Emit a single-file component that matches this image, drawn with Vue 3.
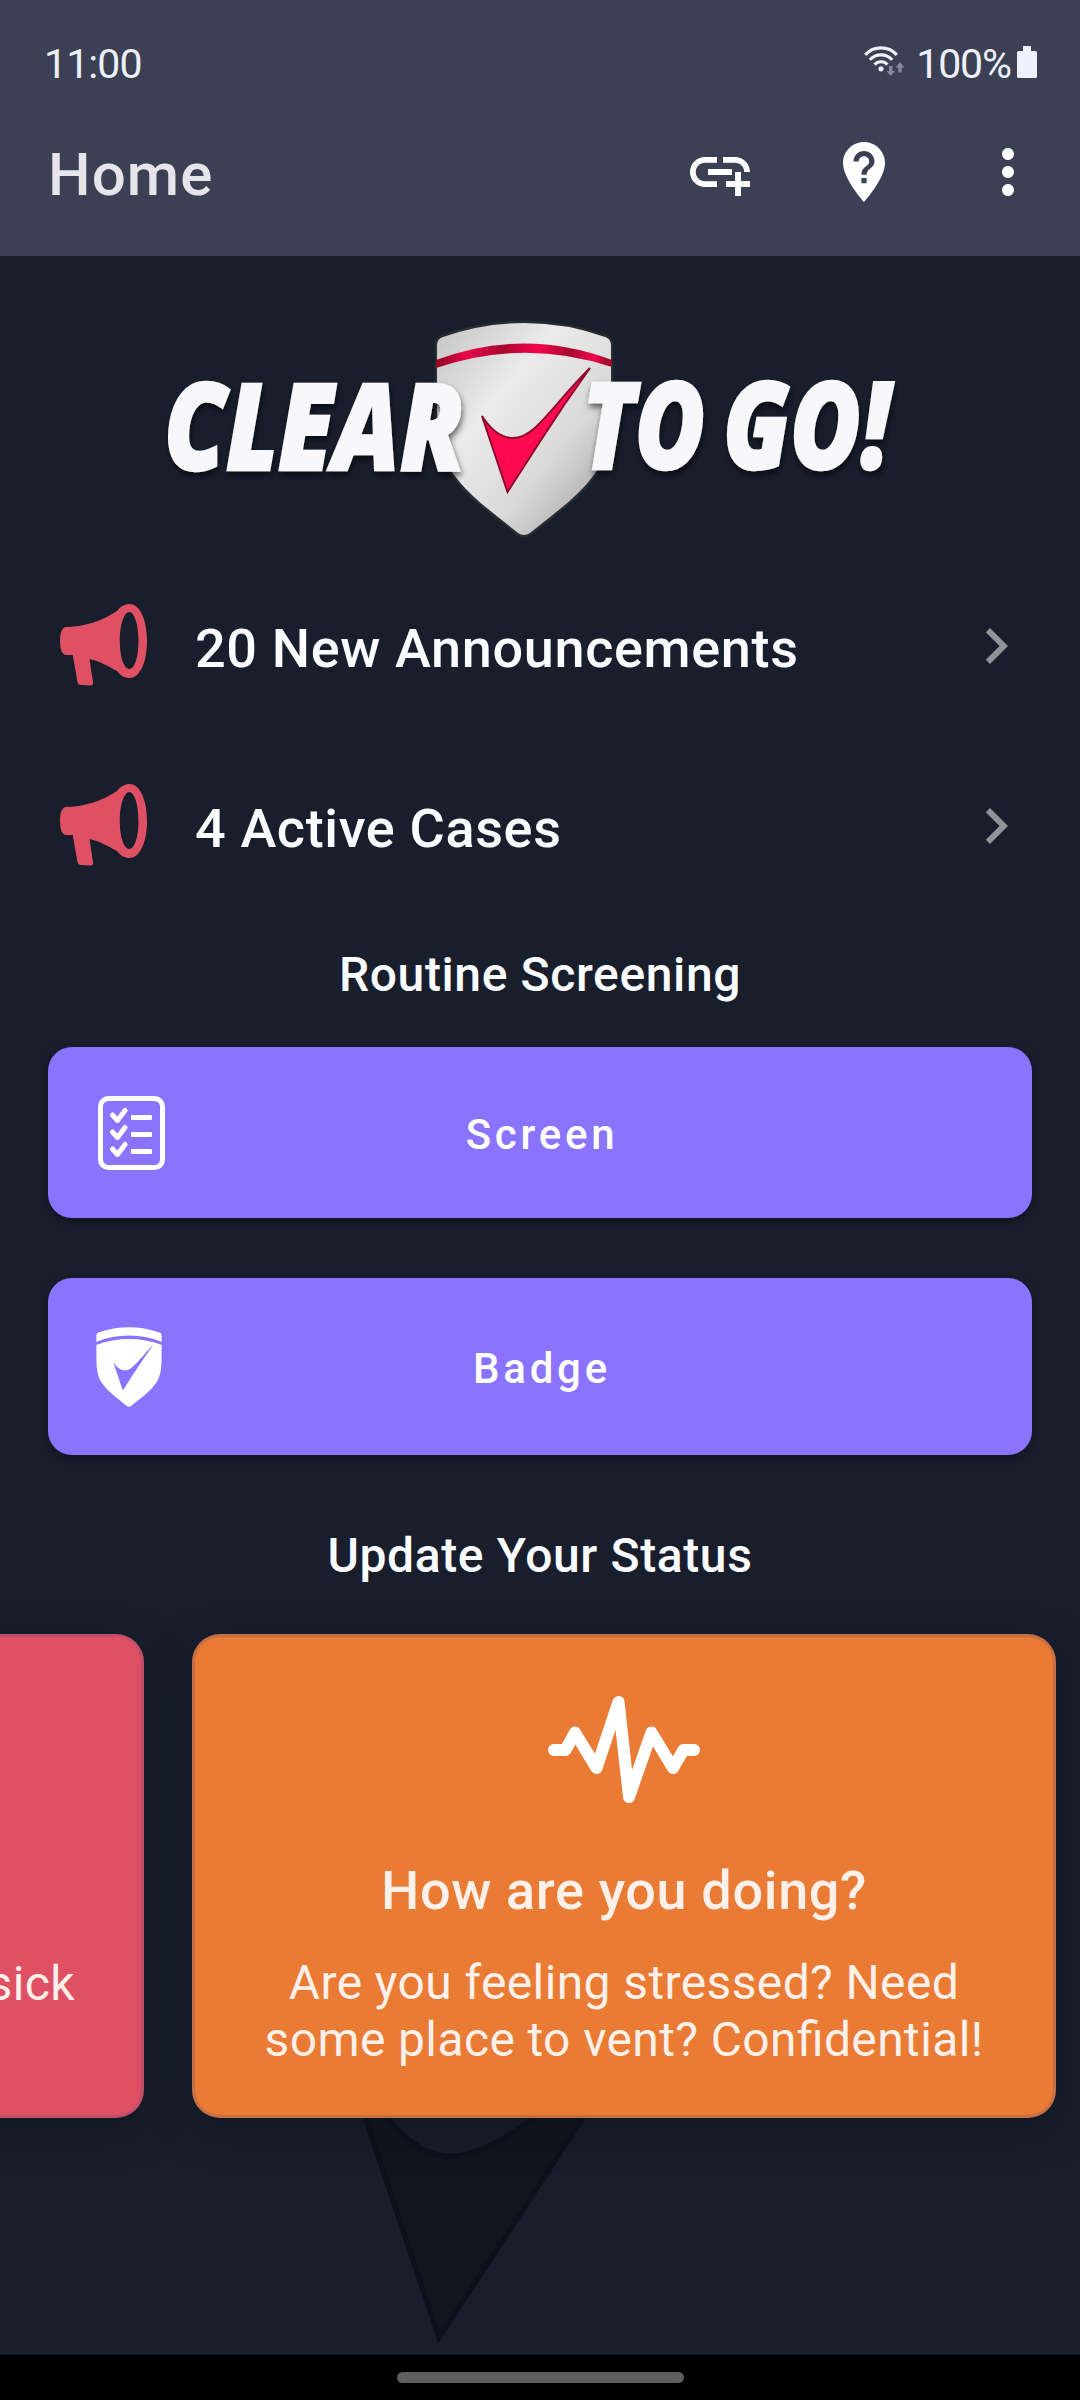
<template>
  <div class="screen">
    <header class="top">
      <div class="status-bar">
        <span class="clock">11:00</span>
        <div class="status-right">
          <svg class="wifi" width="42" height="32" viewBox="0 0 42 32">
            <g fill="none" stroke="#eef1fb" stroke-width="3.2">
              <path d="M1.2 9.8a21.5 21.5 0 0 1 31.6 0" />
              <path d="M5.8 14.8a15 15 0 0 1 22.4 0" />
              <path d="M10.6 19.6a8.6 8.6 0 0 1 12.8 0" />
            </g>
            <circle cx="17" cy="23.8" r="2.6" fill="#eef1fb" />
            <g fill="#84889a">
              <path d="M25 21h3.4v5H31l-4.3 5-4.3-5H25z" />
              <path d="M34.3 27.5h3.4v-5h2.7l-4.4-5.5-4.4 5.5h2.7z" />
            </g>
          </svg>
          <span class="percent">100%</span>
          <svg class="battery" width="20" height="32" viewBox="0 0 20 32">
            <path fill="#eef1fb" d="M6 0h8v5h4.5q1.5 0 1.5 1.5v24q0 1.5-1.5 1.5h-17Q0 32 0 30.5v-24Q0 5 1.5 5H6z" />
          </svg>
        </div>
      </div>
      <div class="toolbar">
        <h1>Home</h1>
        <nav class="actions">
          <svg v-for="icon in actions" :key="icon.name" viewBox="0 0 24 24">
            <path :d="icon.path" />
          </svg>
        </nav>
      </div>
    </header>

    <main class="content">
      <svg class="watermark" width="420" height="440" viewBox="0 0 420 440">
        <path
          d="M-14 -20Q65 254 150 254Q225 254 385 60L139 436Z"
          fill="#12141e"
          stroke="#0c111b"
          stroke-width="5"
        />
      </svg>

      <svg class="logo" width="760" height="240" viewBox="150 310 760 240">
        <defs>
          <linearGradient id="metal" x1="0" y1="0" x2="1" y2="1">
            <stop offset="0" stop-color="#c4c4c4" />
            <stop offset="0.35" stop-color="#ebebeb" />
            <stop offset="0.65" stop-color="#d9d9d9" />
            <stop offset="1" stop-color="#999" />
          </linearGradient>
          <linearGradient id="band" x1="0" x2="1">
            <stop offset="0" stop-color="#8c0a25" />
            <stop offset="0.17" stop-color="#e8064a" />
            <stop offset="0.38" stop-color="#a8082f" />
            <stop offset="0.58" stop-color="#f3064e" />
            <stop offset="0.76" stop-color="#a8082f" />
            <stop offset="0.9" stop-color="#ee0a4c" />
            <stop offset="1" stop-color="#8c0a25" />
          </linearGradient>
          <filter id="drop" x="-10%" y="-20%" width="120%" height="150%">
            <feDropShadow dx="1" dy="4" stdDeviation="3" flood-color="#000" flood-opacity="0.6" />
          </filter>
        </defs>
        <path :d="shield" fill="url(#metal)" stroke="#292c2e" stroke-width="5" paint-order="stroke" />
        <path d="M436 360Q524 327 612 360V367Q524 338 436 368Z" fill="url(#band)" />
        <path :d="check" fill="#ff0a50" stroke="#8e0a2c" stroke-width="2" />
        <g class="logo-text" filter="url(#drop)">
          <text x="164" y="470" textLength="300" lengthAdjust="spacingAndGlyphs">CLEAR</text>
          <text x="582" y="469" textLength="123" lengthAdjust="spacingAndGlyphs">TO</text>
          <text x="723" y="469" textLength="167" lengthAdjust="spacingAndGlyphs">GO!</text>
        </g>
      </svg>

      <ul class="notices">
        <li v-for="notice in notices" :key="notice">
          <svg class="horn" width="88" height="84" viewBox="60 603 88 84">
            <path
              fill="#e05064"
              fill-rule="evenodd"
              d="M65 627C84 627 102 621 117 611C121 606 125 604 129.5 604C140 604 147 620 147 641S140 678 129.5 678C125 678 121 676 117 671C108 666 99 661 89.5 659L93 682Q93.5 685.5 90 685.5L81 685Q78 685 77.5 682L72.7 655H65Q60 653 60 641T65 627ZM129.3 612C124 612 119.8 625 119.8 641S124 669 129.3 669S138.5 657 138.5 641S134.5 612 129.3 612Z"
            />
          </svg>
          <span>{{ notice }}</span>
          <svg class="chevron" viewBox="0 0 24 24">
            <path d="M10 6L8.59 7.41 13.17 12l-4.58 4.59L10 18l6-6z" />
          </svg>
        </li>
      </ul>

      <h2 class="routine">Routine Screening</h2>
      <button class="action screen-btn">
        <svg width="67" height="74" viewBox="0 0 67 74">
          <g fill="none" stroke="#fff" stroke-width="5" stroke-linecap="round" stroke-linejoin="round">
            <rect x="2.5" y="2.5" width="62" height="69" rx="8" />
            <path v-for="y in [0, 17, 34]" :key="y" :d="`M14.5 ${y + 19}l5 5.5 7.5-10`" />
          </g>
          <rect v-for="y in [0, 17, 34]" :key="y" x="33" :y="y + 19" width="21" height="5" rx="1" fill="#fff" />
        </svg>
        <span>Screen</span>
      </button>
      <button class="action badge-btn">
        <svg width="66" height="80" viewBox="436 322 176 214" preserveAspectRatio="none">
          <path :d="shield" fill="#fff" />
          <path d="M436 362Q524 328 612 362V370Q524 338 436 370Z" fill="#8973ff" />
          <path :d="check" fill="#8973ff" />
        </svg>
        <span>Badge</span>
      </button>

      <h2 class="update">Update Your Status</h2>
      <div class="cards">
        <section class="card sick">
          <p>sick</p>
        </section>
        <section class="card mood">
          <svg width="152" height="108" viewBox="548 1695 152 108">
            <path
              d="M554 1750h11.5l9.5-17.5 21.5 35.5 22-66 10.5 95 22.5-64.500 21.500 35.500 10.500-18H694"
              fill="none"
              stroke="#fff"
              stroke-width="12"
              stroke-linecap="round"
              stroke-linejoin="round"
            />
          </svg>
          <h3>How are you doing?</h3>
          <p>Are you feeling stressed? Need<br />some place to vent? Confidential!</p>
        </section>
      </div>
    </main>

    <footer class="nav-bar"><i></i></footer>
  </div>
</template>

<script setup>
const notices = ['20 New Announcements', '4 Active Cases']

const actions = [
  {
    name: 'add-link',
    path: 'M8 11h8v2H8v-2zm12.1 1H22c0-2.76-2.24-5-5-5h-4v1.9h4c1.71 0 3.1 1.39 3.1 3.1zM3.9 12c0-1.71 1.39-3.1 3.1-3.1h4V7H7c-2.76 0-5 2.24-5 5s2.24 5 5 5h4v-1.9H7c-1.71 0-3.1-1.39-3.1-3.1zM19 12h-2v3h-3v2h3v3h2v-3h3v-2h-3v-3z'
  },
  {
    name: 'location-help',
    path: 'M12 2C8.14 2 5 5.14 5 9c0 5.25 7 13 7 13s7-7.75 7-13c0-3.86-3.14-7-7-7zm.88 13.75h-1.75V14h1.75v1.75zm0-2.87h-1.75c0-2.84 2.62-2.62 2.62-4.38 0-.96-.79-1.75-1.75-1.75s-1.75.79-1.75 1.75H8.5C8.5 6.57 10.07 5 12 5s3.5 1.57 3.5 3.5c0 2.19-2.62 2.41-2.62 4.38z'
  },
  {
    name: 'more',
    path: 'M12 8c1.1 0 2-.9 2-2s-.9-2-2-2-2 .9-2 2 .9 2 2 2zm0 2c-1.1 0-2 .9-2 2s.9 2 2 2 2-.9 2-2-.9-2-2-2zm0 6c-1.1 0-2 .9-2 2s.9 2 2 2 2-.9 2-2-.9-2-2-2z'
  }
]

// shared by the logo and the badge button
const shield =
  'M437 345Q437 339 443 337Q482 323 524 323T605 337Q611 339 611 345V400C611 440 606 460 593 476C578 497 553 514 530 533Q524 537 518 533C495 514 470 497 455 476C442 460 437 440 437 400Z'
const check = 'M482 416Q496 438 513 438C535 438 550 408 590 368Q564 404 541 440L507.5 492Z'
</script>

<style>
body {
  background: #191e2d;
}
</style>

<style scoped>
.screen {
  display: flex;
  flex-direction: column;
  width: 1080px;
  height: 2400px;
  overflow: hidden;
  background: #191e2d;
  color: #fafcff;
  font-family: Roboto, sans-serif;
}

h1,
h2,
h3,
p,
ul {
  margin: 0;
  padding: 0;
  font-weight: 500;
}

.top {
  height: 256px;
  background: #3c4054;
}

.status-bar {
  display: flex;
  justify-content: space-between;
  height: 88px;
  padding: 40px 43px 0 44px;
  box-sizing: border-box;
  font-size: 41px;
  line-height: 48px;
  color: #eef1fb;
}

.clock {
  letter-spacing: -0.9px;
}

.status-right {
  display: flex;
}

.wifi {
  margin: 5px 10px 0 0;
}

.percent {
  letter-spacing: -1.1px;
}

.battery {
  margin: 6px 0 0 6px;
}

.toolbar {
  display: flex;
  align-items: center;
  justify-content: space-between;
  height: 168px;
  padding: 0 36px 0 48px;
}

.toolbar h1 {
  font-size: 60px;
  letter-spacing: 1.1px;
  line-height: 70px;
  padding-top: 5px;
  color: #e6e5ea;
}

.actions {
  display: flex;
  gap: 72px;
}

.actions svg {
  width: 72px;
  height: 72px;
  fill: #fff;
}

.content {
  position: relative;
  display: flex;
  flex-direction: column;
  height: 2099px;
  overflow: hidden;
}

/* sits behind the cards */
.watermark {
  position: absolute;
  left: 300px;
  top: 1646px;
}

.logo {
  margin: 54px 0 0 150px;
}

.logo-text {
  fill: #f8f8fa;
  stroke: #f8f8fa;
  stroke-width: 2.5px;
  font-family: 'Open Sans', sans-serif;
  font-size: 121px;
  font-style: italic;
  font-weight: 800;
}

.notices {
  list-style: none;
  margin-top: 6px;
}

.notices li {
  display: flex;
  align-items: center;
  height: 180px;
  padding: 0 48px 0 60px;
}

.horn {
  margin-top: -2px;
}

.notices span {
  flex: 1;
  margin-left: 47px;
  padding-top: 6px;
  font-size: 54px;
  font-weight: 500;
  letter-spacing: 0.65px;
  line-height: 64px;
}

.chevron {
  width: 72px;
  height: 72px;
  fill: #8f9299;
}

h2 {
  text-align: center;
  font-size: 48px;
  line-height: 56px;
  letter-spacing: 0.62px;
}

.routine {
  margin-top: 31px;
}

.action {
  display: grid;
  grid-template-columns: 67px 1fr 67px;
  align-items: center;
  margin: 0 48px;
  padding: 0 50px;
  border: 0;
  border-radius: 24px;
  background: #8973ff;
  box-shadow: 0 3px 8px rgba(8, 12, 20, 0.5);
  color: #fff;
  font: 500 42px/50px Roboto, sans-serif;
  letter-spacing: 3.75px;
}

.action span {
  padding: 4px 0 0 4px;
}

.screen-btn {
  height: 171px;
  margin-top: 44px;
}

.badge-btn {
  height: 177px;
  margin-top: 60px;
}

.badge-btn svg {
  margin-left: -2px;
}

.update {
  margin-top: 73px;
}

.cards {
  position: relative;
  display: flex;
  gap: 48px;
  width: 1776px;
  margin: 50px 0 0 -720px;
}

.card {
  display: flex;
  flex-direction: column;
  align-items: center;
  width: 864px;
  height: 484px;
  box-sizing: border-box;
  border: 3px solid rgba(90, 70, 120, 0.25);
  border-radius: 28px;
  box-shadow: 0 12px 36px rgba(10, 20, 24, 0.6);
  color: #fff0ea;
}

.sick {
  background-color: #e05064;
  align-items: flex-end;
  padding: 318px 66px 0 0;
}

.mood {
  background-color: #ea7b35;
  padding-top: 58px;
}

.card h3 {
  margin-top: 56px;
  font-size: 54px;
  letter-spacing: 0.65px;
  line-height: 64px;
}

.card p {
  font-size: 48px;
  font-weight: 400;
  font-feature-settings: 'liga' 1;
  letter-spacing: 0.38px;
  line-height: 57px;
  text-align: center;
}

.mood p {
  margin-top: 31px;
}

.nav-bar {
  display: flex;
  justify-content: center;
  height: 45px;
  padding-top: 17px;
  box-sizing: border-box;
  background: #000;
}

.nav-bar i {
  width: 287px;
  height: 11px;
  border-radius: 6px;
  background: #5f5f5f;
}
</style>
